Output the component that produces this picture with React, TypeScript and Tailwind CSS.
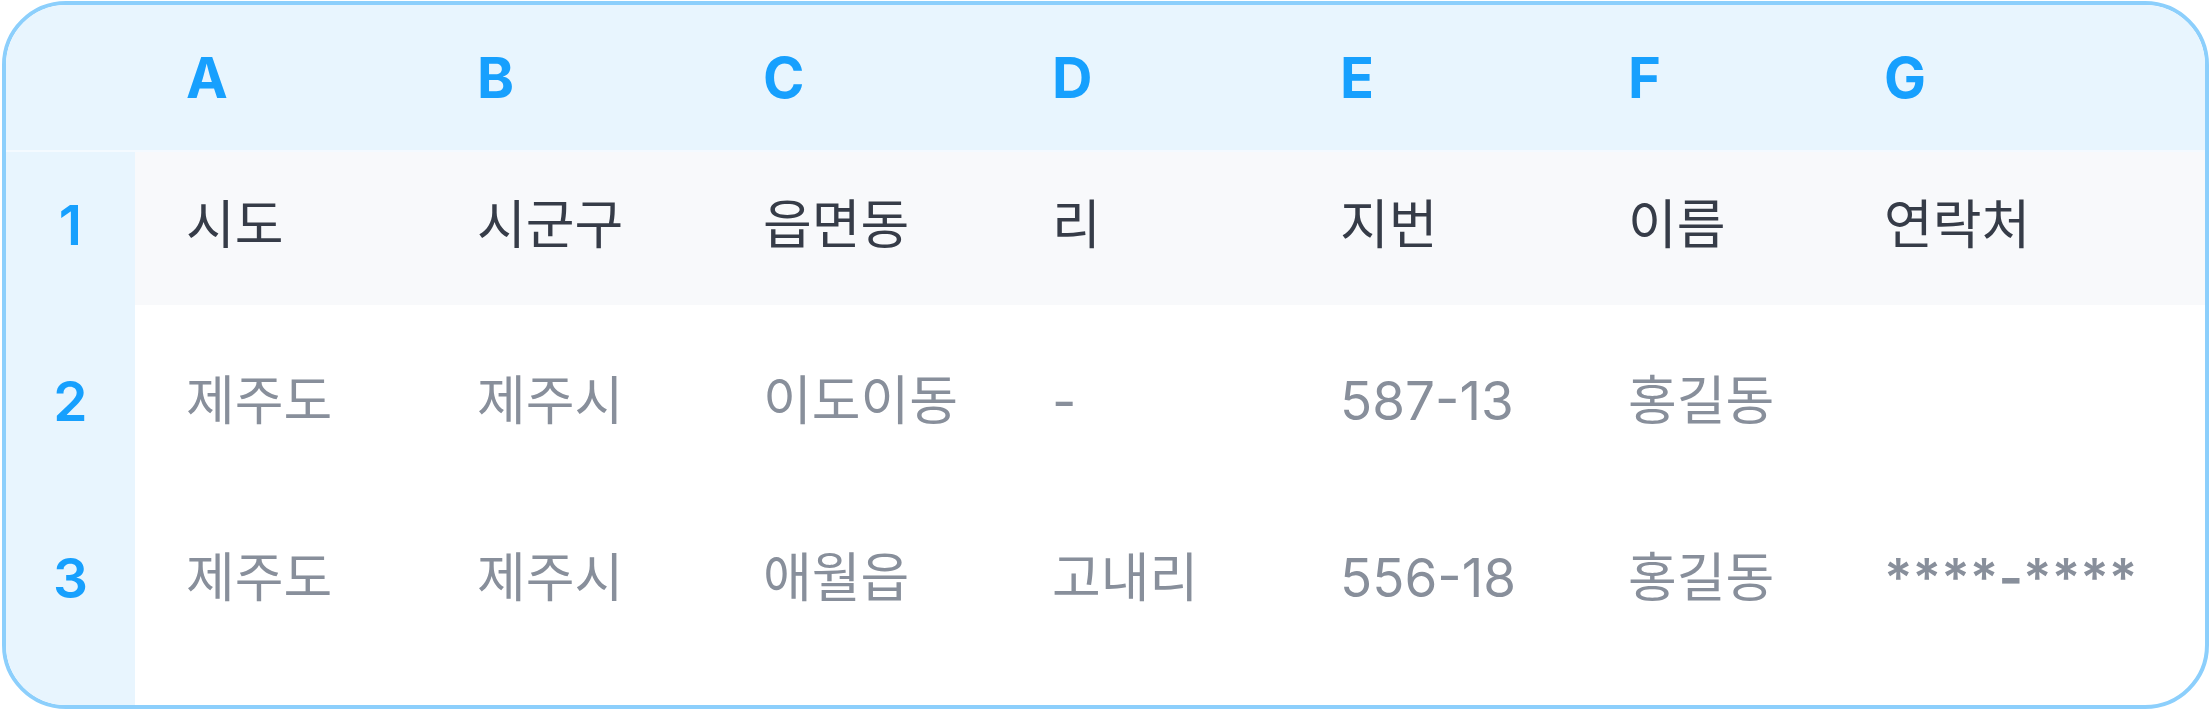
const columns = ["A", "B", "C", "D", "E", "F", "G"];

const rows = [
  { no: 1, head: true, cells: ["시도", "시군구", "읍면동", "리", "지번", "이름", "연락처"] },
  { no: 2, head: false, cells: ["제주도", "제주시", "이도이동", "-", "587-13", "홍길동", ""] },
  { no: 3, head: false, cells: ["제주도", "제주시", "애월읍", "고내리", "556-18", "홍길동", "****-****"] },
];

const grid = "grid grid-cols-[129px_291px_286px_289px_288px_288px_256px_1fr]";

const App = () => {
  return (
    <div className="w-[2209px] h-[709px] bg-white pt-[1px] pl-[2px] font-['Inter','Noto_Sans_CJK_KR',sans-serif]">
      <div className="w-[2207px] h-[708px] border-4 border-[#8ccffc] rounded-[64px] overflow-hidden flex flex-col bg-white">
        {/* column letters */}
        <div className={classNames(grid, "h-[147px] bg-[#e8f5fe] border-b-2 border-[#f4faff]")}>
          <div />
          {columns.map((c) => (
            <div key={c} className="pl-[51px] flex items-center text-[56px] leading-none font-bold text-[#17a0fe]">
              {c}
            </div>
          ))}
        </div>

        {rows.map((row) => (
          <div key={row.no} className={classNames(grid, row.head ? "h-[153px]" : "h-[177px]")}>
            <div
              className={classNames(
                "flex items-center justify-center bg-[#e8f5fe] text-[55px] leading-none font-semibold text-[#17a0fe]",
                row.head ? "pb-[7px]" : "pt-[15px]"
              )}
            >
              {row.no}
            </div>
            {row.cells.map((cell, i) => (
              <div
                key={i}
                className={classNames(
                  "pl-[51px] flex items-center text-[53px] leading-none whitespace-nowrap",
                  row.head ? "bg-[#f8f9fb] text-[#363c48] pb-[7px]" : "text-[#888f9b] pt-[15px]",
                  cell.startsWith("*") && "font-semibold"
                )}
              >
                {cell}
              </div>
            ))}
          </div>
        ))}

        <div className={classNames(grid, "flex-1")}>
          <div className="bg-[#e8f5fe]" />
        </div>
      </div>
    </div>
  );
};

function classNames(...names: (string | false | undefined)[]) {
  return names.filter(Boolean).join(" ");
}

export default App;
